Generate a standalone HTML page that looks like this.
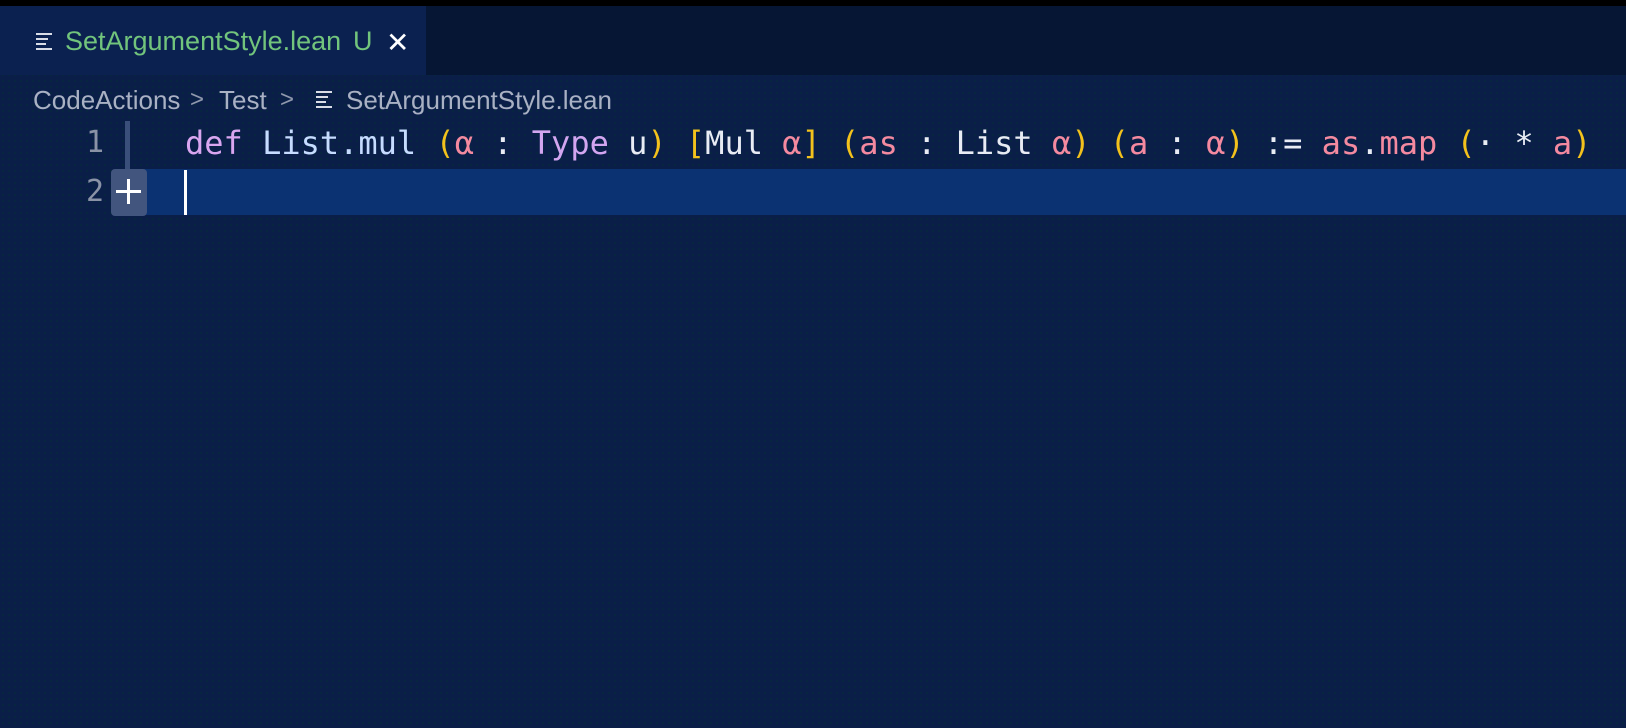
<!DOCTYPE html>
<html><head><meta charset="utf-8"><style>
html,body{margin:0;padding:0;}
body{width:1626px;height:728px;overflow:hidden;background:#0a1e48;position:relative;font-family:"Liberation Sans",sans-serif;
background-image:radial-gradient(circle,rgba(0,60,40,0.25) 1px,transparent 1.5px);background-size:6px 6px;}
.top{position:absolute;left:0;top:0;width:1626px;height:6px;background:#000;}
.tabbar{position:absolute;left:0;top:6px;width:1626px;height:69px;background:#061634;}
.tab{position:absolute;left:0;top:6px;width:426px;height:69px;background:#0b2150;}
.tabtxt{position:absolute;left:65px;top:26px;font-size:27px;color:#72c47c;line-height:30px;white-space:nowrap;}
.ico{position:absolute;width:16px;}
.ico i{display:block;height:2px;background:#d8dce6;margin-bottom:3px;}
.crumb{position:absolute;left:33px;top:85px;font-size:26px;color:#a9b1c4;line-height:30px;white-space:nowrap;}
.code{position:absolute;left:185px;font-family:"DejaVu Sans Mono","Liberation Mono",monospace;font-size:32px;line-height:46px;white-space:pre;color:#e8ecf4;}
.ln{position:absolute;font-family:"DejaVu Sans Mono",monospace;font-size:30px;color:#8a93a6;line-height:46px;}
.hl{position:absolute;left:120px;top:169px;width:1506px;height:46px;background:#0b3272;}
.k{color:#d9a6f0}.n{color:#c6dcff}.y{color:#f2c21c}.p{color:#f48aa0}.t{color:#d2a6f0}.w{color:#ffffff}
</style></head><body>
<div class="top"></div>
<div class="tabbar"></div>
<div class="tab"></div>
<div class="ico" style="left:36px;top:33px"><i></i><i style="width:12px"></i><i style="width:10px"></i><i></i></div>
<div class="tabtxt">SetArgumentStyle.lean</div>
<div class="tabtxt" style="left:353px">U</div>
<div style="position:absolute;left:386px;top:29px;font-size:28px;color:#fff;line-height:28px;">✕</div>
<div class="crumb">CodeActions</div>
<div class="crumb" style="left:190px;font-size:24px;color:#8f98ad">&gt;</div>
<div class="crumb" style="left:219px">Test</div>
<div class="crumb" style="left:280px;font-size:24px;color:#8f98ad">&gt;</div>
<div class="ico" style="left:316px;top:91px"><i></i><i style="width:12px"></i><i style="width:10px"></i><i></i></div>
<div class="crumb" style="left:346px">SetArgumentStyle.lean</div>
<div class="hl"></div>
<div style="position:absolute;left:125px;top:121px;width:5px;height:50px;background:#3a4f7a"></div>
<div class="ln" style="left:86px;top:120px">1</div>
<div class="ln" style="left:86px;top:169px">2</div>
<div style="position:absolute;left:111px;top:169px;width:36px;height:47px;background:#42557e;border-radius:4px;"></div>
<div style="position:absolute;left:116px;top:190px;width:25px;height:3px;background:#fff"></div>
<div style="position:absolute;left:127px;top:179px;width:3px;height:25px;background:#fff"></div>
<div class="code" style="top:120px"><span class="k">def</span> <span class="n">List.mul</span> <span class="y">(</span><span class="p">α</span> : <span class="t">Type</span> u<span class="y">)</span> <span class="y">[</span>Mul <span class="p">α</span><span class="y">]</span> <span class="y">(</span><span class="p">as</span> : List <span class="p">α</span><span class="y">)</span> <span class="y">(</span><span class="p">a</span> : <span class="p">α</span><span class="y">)</span> := <span class="p">as</span>.<span class="p">map</span> <span class="y">(</span>· * <span class="p">a</span><span class="y">)</span></div>
<div style="position:absolute;left:184px;top:170px;width:3px;height:45px;background:#fff"></div>
</body></html>
